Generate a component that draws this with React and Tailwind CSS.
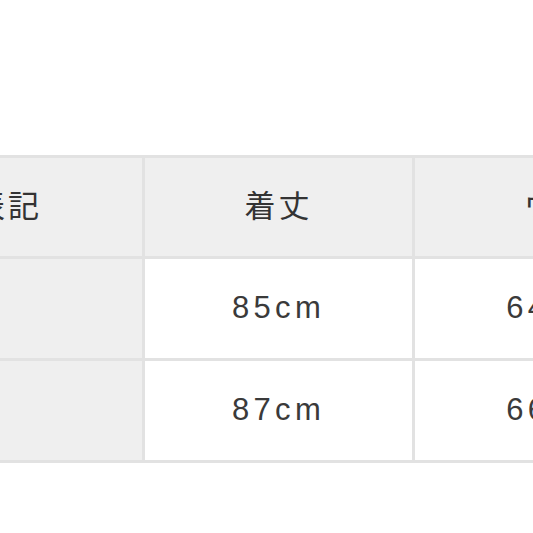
const headers = ['表記', '着丈', 'ウエスト']

const rows = [
  ['', '85cm', '64〜68cm'],
  ['', '87cm', '66〜70cm'],
]

export default function App() {
  return (
    <div
      className="h-[533px] w-[533px] overflow-hidden bg-white text-[#333]"
      style={{ fontFamily: '"Liberation Sans", "Noto Sans CJK JP", sans-serif' }}
    >
      <div className="ml-[-129px] mt-[155px] grid w-max grid-cols-[268px_267px_354px] gap-[3px] bg-[#e2e2e2] p-[3px]">
        {headers.map((h) => (
          <div
            key={h}
            className="flex h-[98px] items-center justify-center bg-[#efefef] text-[31px] tracking-[0.1em]"
          >
            {h}
          </div>
        ))}
        {rows.map((r, i) =>
          r.map((cell, j) => (
            <div
              key={i + '-' + j}
              className={
                j === 0
                  ? 'h-[99px] bg-[#efefef]'
                  : 'flex h-[99px] items-center justify-center bg-white text-[31px] tracking-[0.14em] text-[#3a3a3a]'
              }
            >
              {cell}
            </div>
          ))
        )}
      </div>
    </div>
  )
}
